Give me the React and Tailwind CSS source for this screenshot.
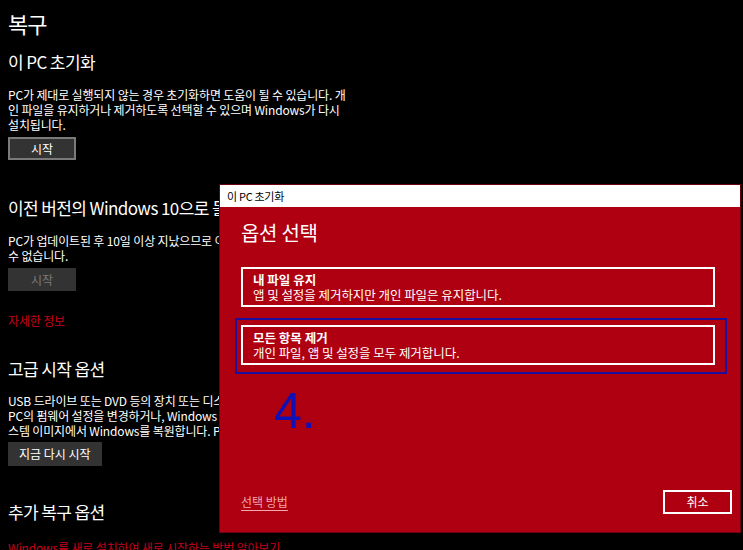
const font = { fontFamily: '"Noto Sans CJK KR", "Noto Sans", sans-serif' };

function Heading({ children, className = '' }) {
  return (
    <h2 className={`text-[17px] leading-[24px] tracking-[-0.6px] text-white whitespace-nowrap ${className}`}>
      {children}
    </h2>
  );
}

function Para({ lines, className = '' }) {
  return (
    <div className={`text-[12px] leading-[15px] tracking-[-0.15px] text-white ${className}`}>
      {lines.map((l) => (
        <div key={l} className="whitespace-nowrap">{l}</div>
      ))}
    </div>
  );
}

function OptionBox({ title, desc }) {
  return (
    <div className="border-2 border-white px-[10px] pt-[3px] pb-[3px] text-white">
      <div className="text-[12.5px] leading-[15px] font-bold tracking-[0px]">{title}</div>
      <div className="text-[12.5px] leading-[15px] tracking-[-0.05px]">{desc}</div>
    </div>
  );
}

export default function App() {
  return (
    <div className="relative w-[743px] h-[550px] overflow-hidden bg-black" style={font}>
      {/* 설정 페이지 */}
      <div className="pl-2 pt-2">
        <h1 className="text-[22px] leading-[30px] tracking-[-1px] text-white">복구</h1>

        <Heading className="mt-3">이 PC 초기화</Heading>
        <Para
          className="mt-[13px]"
          lines={[
            'PC가 제대로 실행되지 않는 경우 초기화하면 도움이 될 수 있습니다. 개',
            '인 파일을 유지하거나 제거하도록 선택할 수 있으며 Windows가 다시',
            '설치됩니다.',
          ]}
        />
        <button className="mt-[5px] w-[68px] h-[23px] bg-[#333333] border-2 border-[#7a7a7a] text-white text-[12px] leading-none">
          시작
        </button>

        <Heading className="mt-[36px]">이전 버전의 Windows 10으로 돌아가기</Heading>
        <Para
          className="mt-[13px]"
          lines={[
            'PC가 업데이트된 후 10일 이상 지났으므로 이전 버전의 Windows 10으로 돌아갈',
            '수 없습니다.',
          ]}
        />
        <button className="mt-[5px] w-[68px] h-[23px] bg-[#333333] text-[#7a7a7a] text-[12px] leading-none">
          시작
        </button>

        <div className="mt-[22px] text-[12px] leading-[15px] tracking-[-0.15px] text-[#c8001c]">자세한 정보</div>

        <Heading className="mt-[29px]">고급 시작 옵션</Heading>
        <Para
          className="mt-[12px] leading-[14px]"
          lines={[
            'USB 드라이브 또는 DVD 등의 장치 또는 디스크에서 시작하거나,',
            'PC의 펌웨어 설정을 변경하거나, Windows 시작 설정을 변경하거나, 시',
            '스템 이미지에서 Windows를 복원합니다. PC가 다시 시작됩니다.',
          ]}
        />
        <button className="mt-[4px] px-[11px] h-[24px] bg-[#333333] text-white text-[12px] leading-none tracking-[0px]">
          지금 다시 시작
        </button>

        <Heading className="mt-[34px]">추가 복구 옵션</Heading>
        <div className="mt-[16px] text-[12px] leading-[15px] tracking-[-0.15px] text-[#c8001c] whitespace-nowrap">
          Windows를 새로 설치하여 새로 시작하는 방법 알아보기
        </div>
      </div>

      {/* 이 PC 초기화 대화 상자 */}
      <div className="absolute left-[219px] top-[184px] w-[522px] h-[349px] flex flex-col border border-[#6b0010] bg-[#ae0010]">
        <div className="h-[22px] shrink-0 bg-white flex items-center pl-[7px] text-[11px] text-black tracking-[-0.3px]">
          이 PC 초기화
        </div>
        <div className="flex-1 flex flex-col px-[21px]">
          <div className="mt-[12px] text-[20px] leading-[28px] tracking-[-0.3px] text-white">옵션 선택</div>
          <div className="mt-[20px] flex flex-col gap-[18px] w-[474px]">
            <OptionBox title="내 파일 유지" desc="앱 및 설정을 제거하지만 개인 파일은 유지합니다." />
            <div className="relative">
              <OptionBox title="모든 항목 제거" desc="개인 파일, 앱 및 설정을 모두 제거합니다." />
              <div className="absolute -left-[6px] -right-[12px] -top-[7px] -bottom-[9px] border-2 border-[#1a0fa0]" />
            </div>
          </div>
          <div className="mt-[21px] ml-[33px] text-[50px] leading-[50px] text-[#1010b4]" style={{ fontFamily: '"Liberation Sans", sans-serif' }}>
            4.
          </div>
          <div className="mt-auto mb-[18px] flex items-end justify-between">
            <span className="text-[12px] tracking-[0px] text-[#f2a6ae] underline underline-offset-[3px] mb-[3px]">
              선택 방법
            </span>
            <button className="w-[69px] h-[24px] border-2 border-white text-white text-[12px] leading-none mr-[-13px]">
              취소
            </button>
          </div>
        </div>
      </div>
    </div>
  );
}
